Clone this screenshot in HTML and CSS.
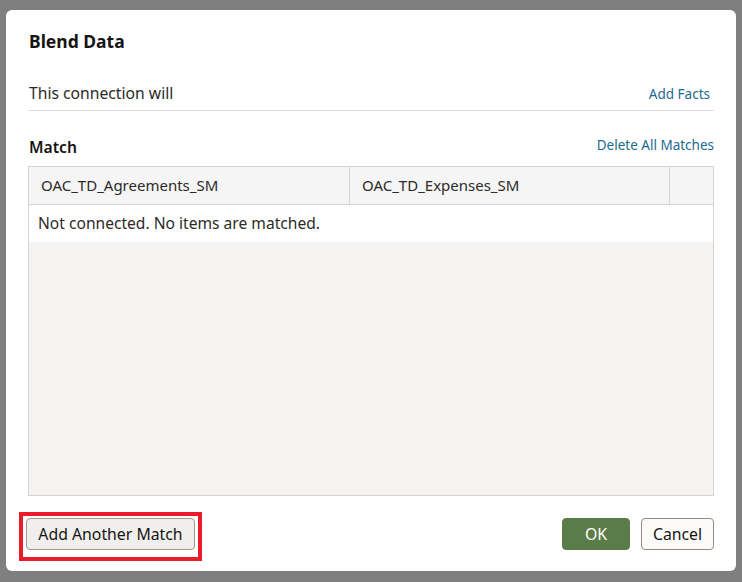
FILE: index.html
```html
<!DOCTYPE html>
<html>
<head>
<meta charset="utf-8">
<link rel="stylesheet" href="styles.css">
</head>
<body>
<div class="dialog">
  <div class="content">
    <h1 class="title">Blend Data</h1>
    <div class="row conn-row">
      <span class="conn-text">This connection will</span>
      <a class="link add-facts">Add Facts</a>
    </div>
    <div class="row match-row">
      <span class="match-label">Match</span>
      <a class="link">Delete All Matches</a>
    </div>
    <div class="table">
      <div class="thead">
        <div class="th c1">OAC_TD_Agreements_SM</div>
        <div class="th c2">OAC_TD_Expenses_SM</div>
        <div class="th c3"></div>
      </div>
      <div class="msg">Not connected. No items are matched.</div>
      <div class="empty"></div>
    </div>
  </div>
  <div class="footer">
    <span class="highlight"><button class="btn btn-secondary">Add Another Match</button></span>
    <div class="actions">
      <button class="btn btn-ok">OK</button>
      <button class="btn btn-cancel">Cancel</button>
    </div>
  </div>
</div>
</body>
</html>
```
FILE: styles.css
```css
html, body {
  margin: 0;
  padding: 0;
  background: #7f7f7f;
  height: 100%;
}
body {
  font-family: "Noto Sans", "Open Sans", sans-serif;
  color: #161513;
  padding: 10px 6px 11px 6px;
  box-sizing: border-box;
  height: 582px;
  overflow: hidden;
}
.dialog {
  background: #fff;
  border-radius: 6px;
  width: 730px;
  height: 561px;
  display: flex;
  flex-direction: column;
  box-sizing: border-box;
}
.content {
  padding: 19px 22px 0 22px;
  display: flex;
  flex-direction: column;
  flex: 1;
}
.title {
  margin: 0 0 0 1px;
  font-size: 17.5px;
  font-weight: 700;
  line-height: 24px;
}
.row {
  display: flex;
  justify-content: space-between;
  align-items: center;
}
.conn-row {
  margin-top: 28px;
  padding: 0 4px 5px 1px;
  border-bottom: 1px solid #dedcda;
  height: 24px;
}
.conn-text {
  font-size: 15.7px;
  line-height: 24px;
  color: #2c2b29;
}
.link {
  font-size: 13.5px;
  color: #1c6a8e;
  line-height: 20px;
  cursor: pointer;
}
.add-facts {
  margin-top: 2px;
}
.match-row {
  margin-top: 24px;
  height: 24px;
  padding-left: 1px;
}
.match-label {
  font-size: 15.7px;
  font-weight: 600;
  line-height: 24px;
  margin-top: 0;
}
.match-row .link {
  margin-top: -4px;
}
.table {
  margin-top: 7px;
  border: 1px solid #d6d4d2;
  display: flex;
  flex-direction: column;
  flex: 1;
  margin-bottom: 16px;
}
.thead {
  display: flex;
  background: #f5f5f5;
  border-bottom: 1px solid #d6d4d2;
  height: 37px;
}
.th {
  font-size: 15px;
  line-height: 37px;
  color: #2c2b29;
  padding-left: 12px;
  box-sizing: border-box;
}
.c1 {
  width: 321px;
  border-right: 1px solid #d6d4d2;
}
.c2 {
  width: 320px;
  border-right: 1px solid #d6d4d2;
}
.c3 {
  flex: 1;
}
.msg {
  background: #fff;
  height: 37px;
  line-height: 37px;
  font-size: 15.6px;
  padding-left: 9px;
  color: #2c2b29;
}
.empty {
  flex: 1;
  background: #f4f3f1;
}
.footer {
  display: flex;
  justify-content: space-between;
  align-items: flex-start;
  padding: 0 22px 10px 13px;
}
.highlight {
  display: inline-block;
  border: 4px solid #ea1c2a;
  padding: 2px 3px 7px 3px;
}
.btn {
  font-family: "Noto Sans", "Open Sans", sans-serif;
  font-size: 15.8px;
  height: 32px;
  border-radius: 4px;
  box-sizing: border-box;
  padding: 0 8px;
  display: block;
  color: #161513;
  cursor: pointer;
}
.btn-secondary {
  width: 169px;
  background: #f1efed;
  border: 1px solid #9c9995;
}
.actions {
  display: flex;
  gap: 11px;
  margin-top: 6px;
}
.btn-ok {
  width: 68px;
  background: #5a7c49;
  border: 1px solid #5a7c49;
  color: #fff;
}
.btn-cancel {
  width: 73px;
  background: #fcfbfa;
  border: 1px solid #8f8c88;
}
```
